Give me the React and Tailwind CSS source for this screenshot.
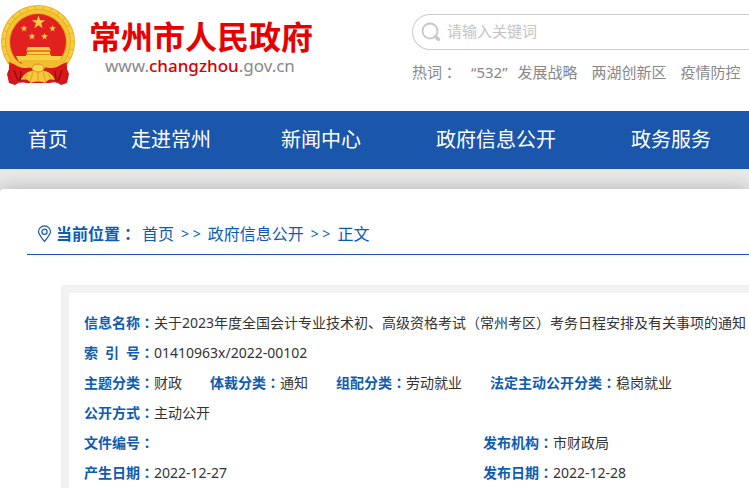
const CJK = 'font-["Noto_Sans","Noto_Sans_CJK_SC",sans-serif]';

const NAV = [
  { label: "首页", width: "w-24" },
  { label: "走进常州", width: "w-[150px]" },
  { label: "新闻中心", width: "w-[150px]" },
  { label: "政府信息公开", width: "w-[200px]" },
  { label: "政务服务", width: "w-[150px]" },
];

const STAR = "M0 -1 L0.235 -0.324 L0.951 -0.309 L0.38 0.124 L0.588 0.809 L0 0.4 L-0.588 0.809 L-0.38 0.124 L-0.951 -0.309 L-0.235 -0.324 Z";

function Emblem() {
  return (
    <svg width="78" height="86" viewBox="0 0 78 86" aria-hidden="true" className="shrink-0">
      <path d="M9 61l58 0 0 8 2 5-2 9-6 2-5-3-7 1H27l-7-1-5 3-6-2-2-9 2-5z" fill="#d3161b" />
      <path d="M13 68l2 13M18 72l1 10M63 68l-2 13M58 72l-1 10" stroke="#8f0f10" strokeWidth="1.5" />
      <ellipse cx="38" cy="42" rx="37" ry="37" fill="#e9ae22" />
      <circle cx="38" cy="42" r="34.500" fill="none" stroke="#f7cf42" strokeWidth="3" strokeDasharray="7 1" />
      <circle cx="38" cy="42" r="30.500" fill="none" stroke="#f3c435" strokeWidth="3" />
      <circle cx="38" cy="42" r="28" fill="#e2201f" />
      <g fill="#f6cf45">
        <path d={STAR} transform="translate(38.500 22.500) scale(7)" />
        <path d={STAR} transform="translate(24 28.500) scale(3.600)" />
        <path d={STAR} transform="translate(52.500 28.500) scale(3.600)" />
        <path d={STAR} transform="translate(32 36.500) scale(3.600)" />
        <path d={STAR} transform="translate(44.500 36.500) scale(3.600)" />
        <path d="M28 47h21l2 3.500H26z" />
        <path d="M27 51.500h23v3H27z" />
        <path d="M16 56h10v-1h25v1h11l-3 6H19z" />
      </g>
      <path d="M26 54.500h25" stroke="#d98d17" />
      <path d="M19 60h40c-3 5-10 9-20 10-10-1-17-5-20-10z" fill="#f1bd30" />
      <path d="M9 62c7 3 13 6 20 5 3 2 6 1 9 1s6 1 9-1c7 1 13-2 20-5l-2 18-9 3-8-9H29l-8 9-9-3z" fill="#d8181b" />
      <path d="M14 70l4 11M21 71l-1 10M62 70l-4 11M55 71l1 10" stroke="#960f11" strokeWidth="1.500" />
      <path d="M14 61c6 6 11 6 17 4 3 3 11 3 14 0 6 2 11 2 17-4" fill="none" stroke="#f3bd31" strokeWidth="4" />
      <path d="M21 80c2-6 8-10 17-10s15 4 17 10c-5-2-7 0-10 3-3-2-11-2-14 0-3-3-5-5-10-3z" fill="#f5c93b" />
      <path d="M38 71v11M33 72l-3 10M43 72l3 10M28 74l-4 6M48 74l4 6" stroke="#e0a024" />
      <ellipse cx="38" cy="68" rx="6" ry="4" fill="#f9d752" stroke="#d98d17" />
    </svg>
  );
}

function Colon() {
  return <span className='font-["Noto_Sans_CJK_TC",sans-serif] leading-none'>：</span>;
}

function Field({ label, children }) {
  return (
    <div className="flex">
      <dt className="font-bold whitespace-pre text-[#0d5cb2]">{label}<Colon /></dt>
      <dd>{children}</dd>
    </div>
  );
}

export default function App() {
  return (
    <div className={`min-h-screen overflow-hidden bg-[#e9e9e9] text-sm text-[#333] whitespace-nowrap ${CJK}`}>
      <header className="flex h-[111px] bg-white">
        <a href="#" className="flex w-[412px] shrink-0">
          <Emblem />
          <span className="flex flex-col pt-5 pl-[11px]">
            <span className='font-["Liberation_Sans","Noto_Sans_CJK_SC",sans-serif] text-[32px] leading-9 font-bold text-[#e60000]'>常州市人民政府</span>
            <span className="pl-4 text-[17px] leading-5 text-[#888]">
              www.<span className="font-medium text-[#d80000]">changzhou</span>.gov.cn
            </span>
          </span>
        </a>
        <div className="min-w-0 grow pt-[14px]">
          <label className="flex h-9 items-center rounded-l-full border border-r-0 border-[#ccc] pl-2">
            <svg width="20" height="20" viewBox="0 0 20 20" fill="none" stroke="#c8c8c8" aria-hidden="true">
              <circle cx="9" cy="9" r="7.500" strokeWidth="1.800" />
              <path d="M14.500 14.500l3 3" strokeWidth="3.400" strokeLinecap="round" />
            </svg>
            <input
              type="text"
              aria-label="搜索"
              placeholder="请输入关键词"
              className="ml-[6px] min-w-0 grow text-[15px] outline-none placeholder:text-[#c4c4c4]"
            />
          </label>
          <div className="mt-3 flex gap-[14px] text-[15px] leading-5 text-[#888]">
            <span>热词<Colon /></span>
            <a href="#" className="flex gap-[10px]"><span>“532”</span><span>发展战略</span></a>
            <a href="#">两湖创新区</a>
            <a href="#">疫情防控</a>
          </div>
        </div>
      </header>

      <nav className="flex h-[58px] items-center bg-[#1a56ab] text-xl text-white">
        {NAV.map((item) => (
          <a key={item.label} href="#" className={`shrink-0 text-center ${item.width}`}>{item.label}</a>
        ))}
      </nav>

      <main className="mt-5 min-h-[300px] rounded-tl bg-white pt-7 pl-[27px] shadow-[0_0_20px_rgba(0,0,0,0.25)]">
        <div className="flex h-[38px] items-center border-b border-[#1a56ab] pb-[3px] pl-[10px] text-base text-[#0d5cb2]">
          <svg width="15" height="18" viewBox="0 0 15 18" fill="none" stroke="#1a56ab" strokeWidth="1.200" aria-hidden="true">
            <path d="M7.500 16.500C5 13 1.500 9.500 1.500 6.800a6 6 0 0 1 12 0C13.500 9.500 10 13 7.500 16.500z" />
            <circle cx="7.500" cy="6.800" r="2.600" />
          </svg>
          <strong className="ml-1">当前位置<Colon /></strong>
          <a href="#" className="ml-[6px]">首页</a>
          <span className="mx-[7px] text-sm">&gt;&nbsp;&gt;</span>
          <a href="#">政府信息公开</a>
          <span className="mx-[7px] text-sm">&gt;&nbsp;&gt;</span>
          <span>正文</span>
        </div>

        <dl className="mt-[30px] ml-[34px] border-8 border-r-0 border-[#f2f2f2] pt-[15px] pl-[15px] leading-[30px]">
          <Field label="信息名称">关于2023年度全国会计专业技术初、高级资格考试（常州考区）考务日程安排及有关事项的通知</Field>
          <Field label="索&#8194;引&#8194;号">01410963x/2022-00102</Field>
          <div className="flex gap-7">
            <Field label="主题分类">财政</Field>
            <Field label="体裁分类">通知</Field>
            <Field label="组配分类">劳动就业</Field>
            <Field label="法定主动公开分类">稳岗就业</Field>
          </div>
          <Field label="公开方式">主动公开</Field>
          <div className="grid grid-cols-[399px_1fr]">
            <Field label="文件编号" />
            <Field label="发布机构">市财政局</Field>
            <Field label="产生日期">2022-12-27</Field>
            <Field label="发布日期">2022-12-28</Field>
          </div>
        </dl>
      </main>
    </div>
  );
}
